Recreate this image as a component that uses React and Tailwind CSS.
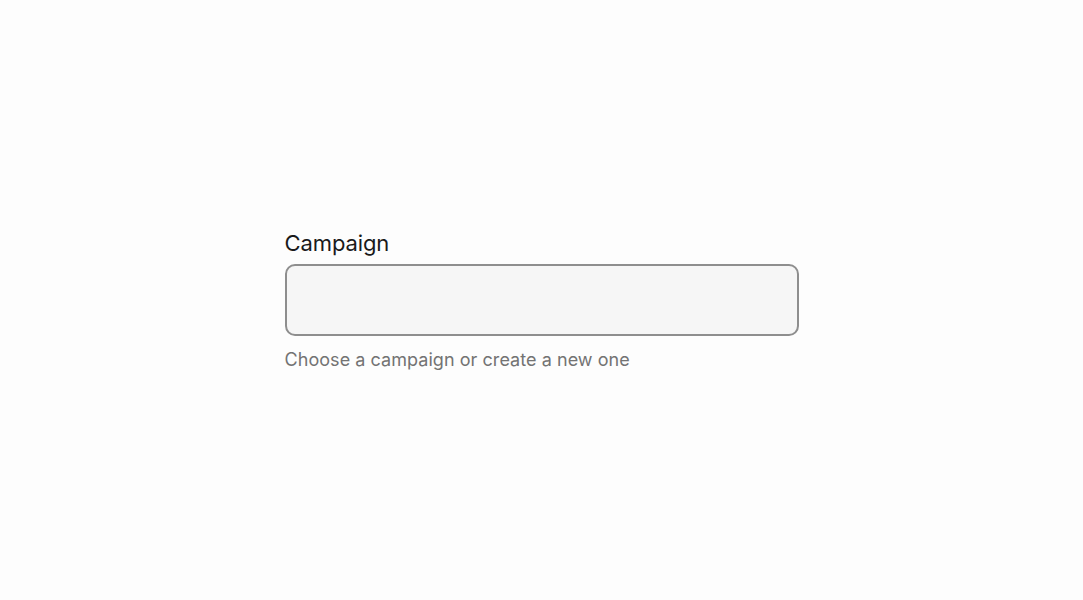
export default function App() {
  return (
    <div className="w-full h-[600px] bg-[#fdfdfd] flex items-center justify-center" style={{ fontFamily: "Inter, 'Noto Sans', sans-serif" }}>
      <div className="w-[514px] flex flex-col mt-[2px]">
        <label className="text-[22px] leading-[26px] text-[#1a1a1a] mb-[8px] tracking-[-0.1px]">Campaign</label>
        <div className="h-[72px] rounded-[10px] border-2 border-[#8e8e8e] bg-[#f6f6f6]"></div>
        <p className="mt-[12px] text-[18px] leading-[24px] text-[#737373] tracking-[0.05px]">Choose a campaign or create a new one</p>
      </div>
    </div>
  );
}
